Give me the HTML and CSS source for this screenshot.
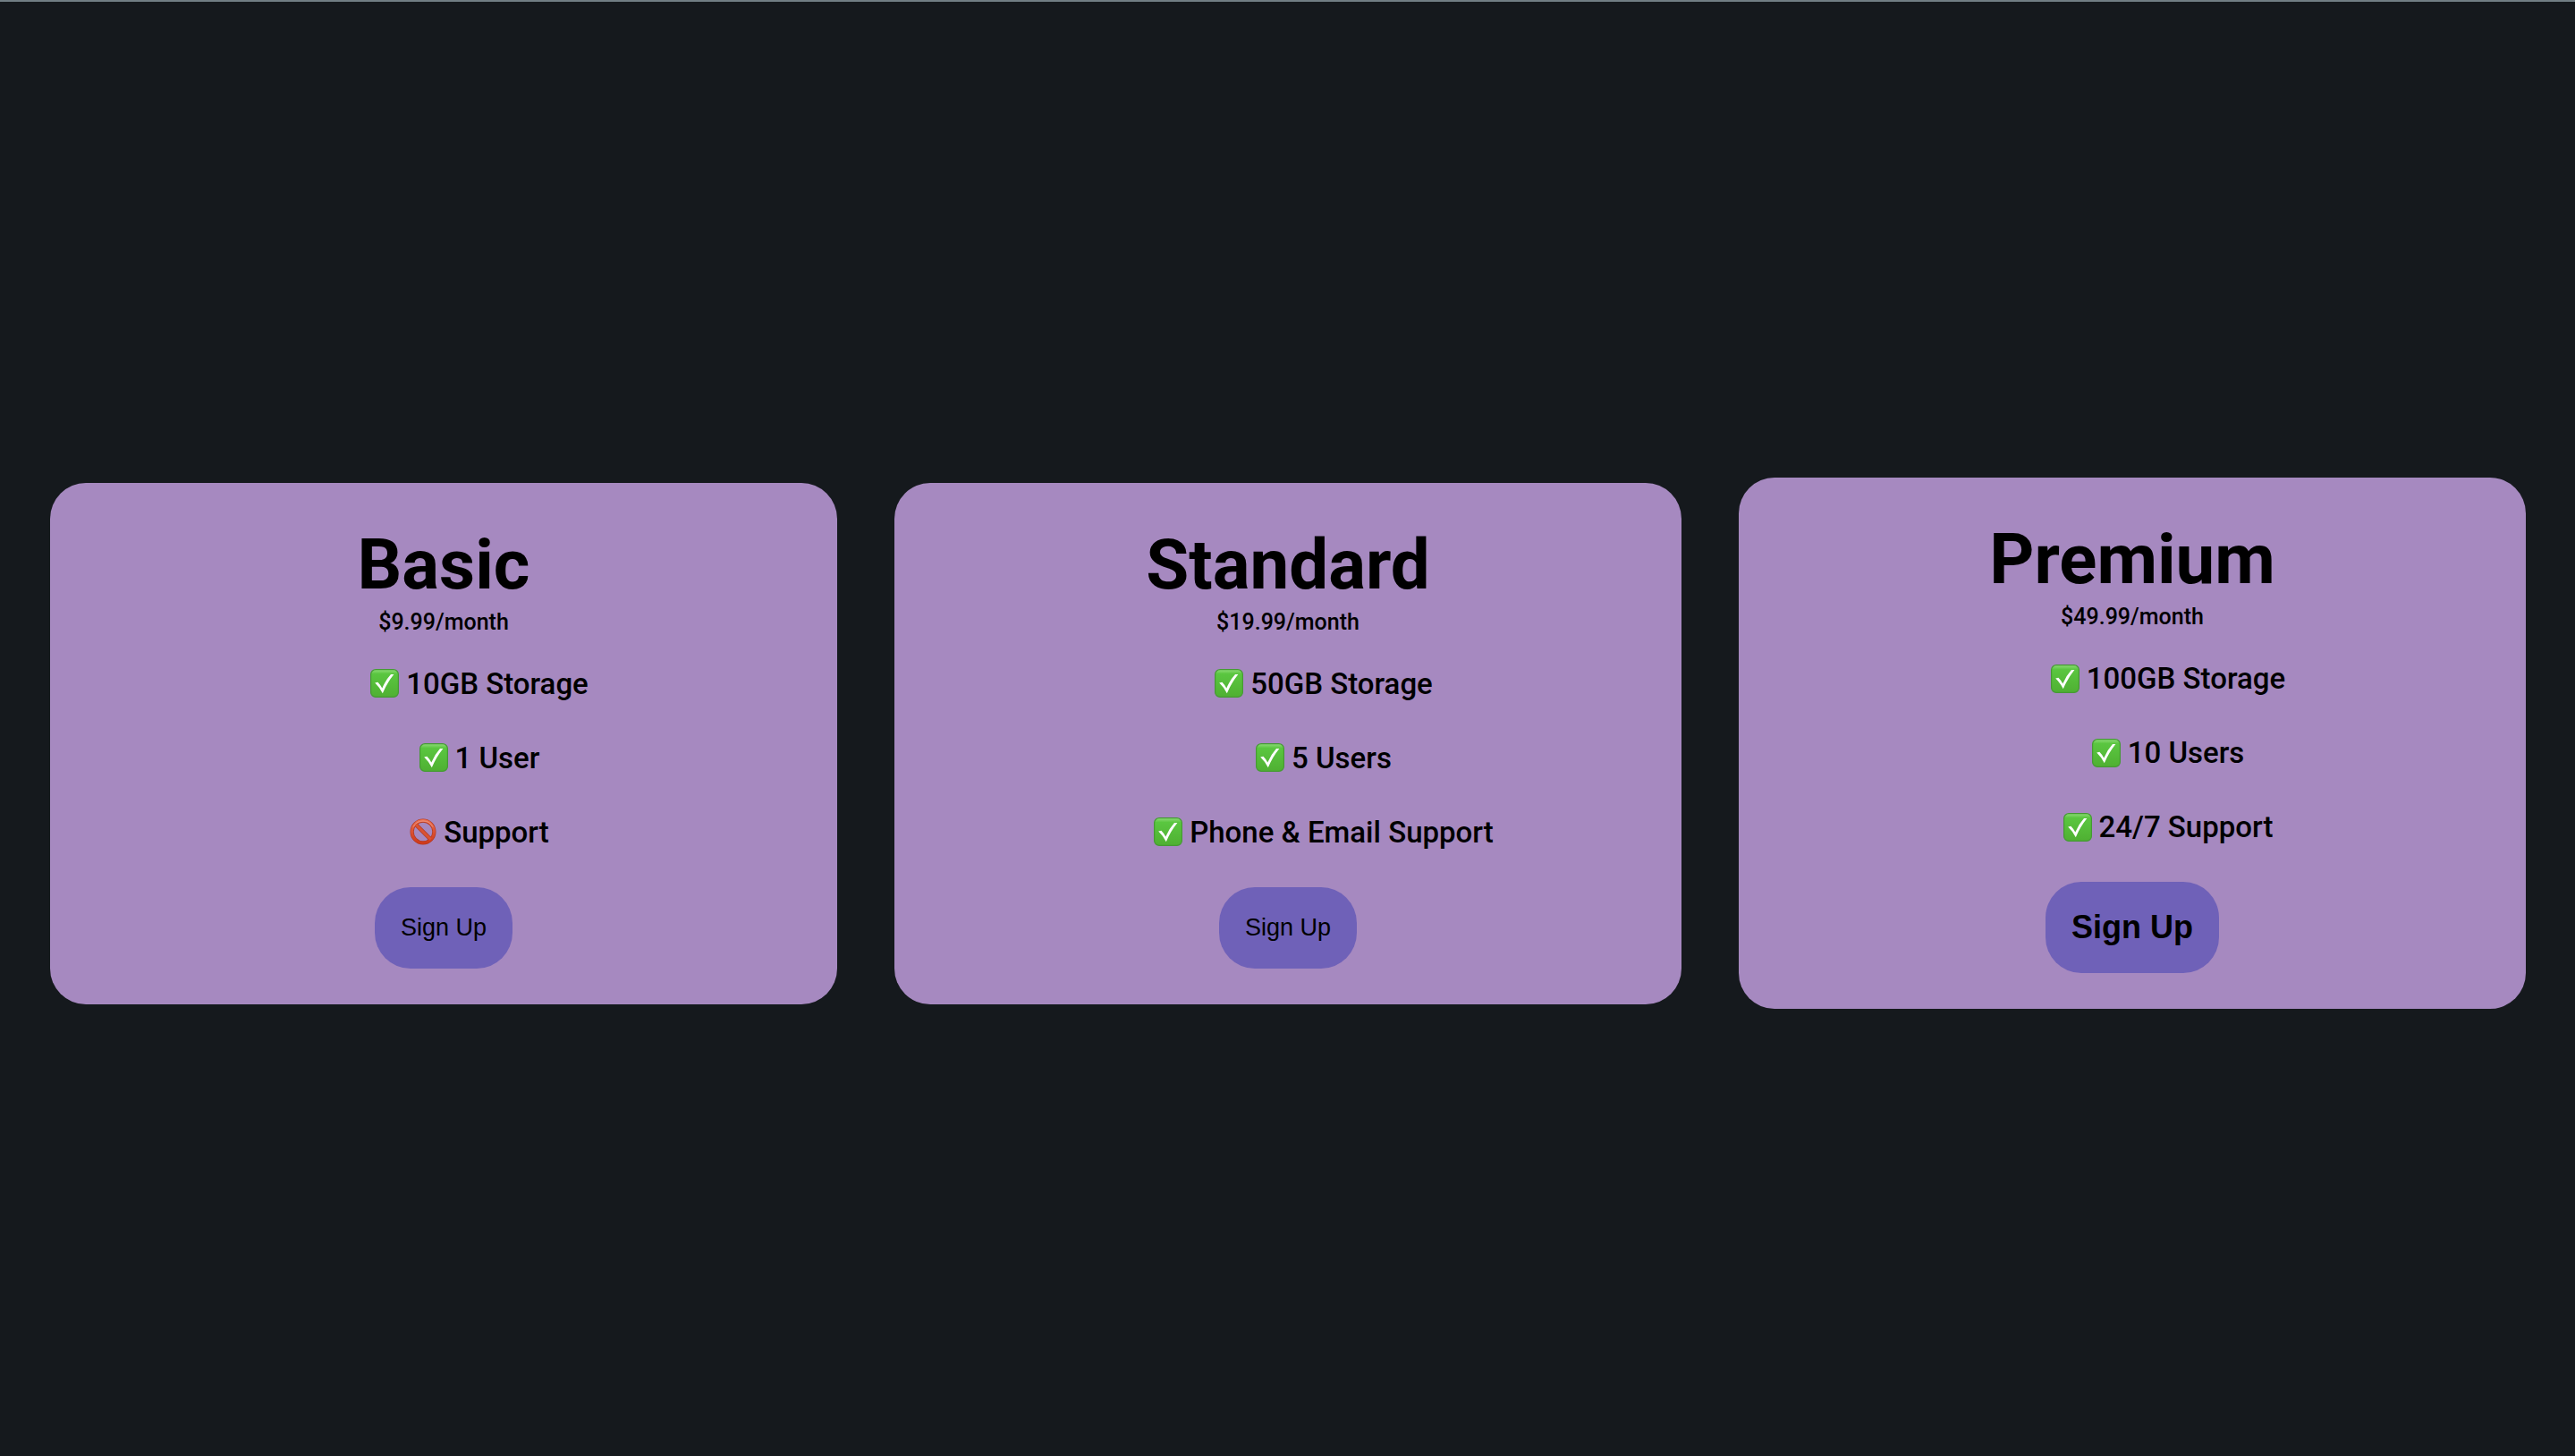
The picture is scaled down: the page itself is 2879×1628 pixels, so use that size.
FILE: index.html
```html
<!DOCTYPE html>
<html lang="en">
<head>
<meta charset="utf-8">
<title>Pricing</title>
<link rel="stylesheet" href="styles.css">
</head>
<body>
<svg class="sprite" aria-hidden="true">
  <defs>
    <linearGradient id="green" x1="0" y1="0" x2="0" y2="1">
      <stop offset="0" stop-color="#8fdc78"/>
      <stop offset="0.16" stop-color="#5ac640"/>
      <stop offset="1" stop-color="#4fb032"/>
    </linearGradient>
    <linearGradient id="red" x1="0" y1="0" x2="0" y2="1">
      <stop offset="0" stop-color="#e8694c"/>
      <stop offset="1" stop-color="#cf3a1c"/>
    </linearGradient>
    <symbol id="yes" viewBox="0 0 32 32">
      <rect x="0.6" y="0.6" width="30.8" height="30.8" rx="5.5" fill="url(#green)" stroke="#459a34" stroke-width="1.2"/>
      <path d="M5.2 15.6 L8.4 14.8 Q11.6 18 13.3 21.6 Q17 12.6 23 6 L26.4 6 Q18.8 15.4 13.8 27.2 Q10.4 20.6 5.2 15.6 Z" fill="#fff"/>
    </symbol>
    <symbol id="no" viewBox="0 0 30 30">
      <g fill="none">
        <circle cx="15" cy="15" r="12.4" stroke="#b03a20" stroke-width="4.2"/>
        <path d="M6.4 6.4 L23.6 23.6" stroke="#b03a20" stroke-width="4.4"/>
        <circle cx="15" cy="15" r="12.4" stroke="url(#red)" stroke-width="3"/>
        <path d="M6.4 6.4 L23.6 23.6" stroke="#da5233" stroke-width="3"/>
        <path d="M4 9.6 A12.4 12.4 0 0 1 26 9.6" stroke="#f0a28c" stroke-width="0.8"/>
      </g>
    </symbol>
  </defs>
</svg>
<main class="plans">
  <section class="plan">
    <h1 class="plan-name">Basic</h1>
    <p class="price">$9.99/month</p>
    <ul class="features">
      <li><svg class="mark" role="img" aria-label="Included"><use href="#yes"/></svg>10GB Storage</li>
      <li><svg class="mark" role="img" aria-label="Included"><use href="#yes"/></svg>1 User</li>
      <li><svg class="mark mark-no" role="img" aria-label="Not included"><use href="#no"/></svg>Support</li>
    </ul>
    <button class="sign-up" type="button">Sign Up</button>
  </section>
  <section class="plan">
    <h1 class="plan-name">Standard</h1>
    <p class="price">$19.99/month</p>
    <ul class="features">
      <li><svg class="mark" role="img" aria-label="Included"><use href="#yes"/></svg>50GB Storage</li>
      <li><svg class="mark" role="img" aria-label="Included"><use href="#yes"/></svg>5 Users</li>
      <li><svg class="mark" role="img" aria-label="Included"><use href="#yes"/></svg>Phone &amp; Email Support</li>
    </ul>
    <button class="sign-up" type="button">Sign Up</button>
  </section>
  <section class="plan">
    <h1 class="plan-name">Premium</h1>
    <p class="price">$49.99/month</p>
    <ul class="features">
      <li><svg class="mark" role="img" aria-label="Included"><use href="#yes"/></svg>100GB Storage</li>
      <li><svg class="mark" role="img" aria-label="Included"><use href="#yes"/></svg>10 Users</li>
      <li><svg class="mark" role="img" aria-label="Included"><use href="#yes"/></svg>24/7 Support</li>
    </ul>
    <button class="sign-up sign-up-large" type="button">Sign Up</button>
  </section>
</main>
</body>
</html>
```
FILE: styles.css
```css
* {
  box-sizing: border-box;
}

body {
  margin: 0;
  min-height: 100vh;
  display: flex;
  align-items: center;
  padding: 32px 55px 0 56px;
  border-top: 2px solid #717e84;
  background: #15191d;
  color: #000;
  font-family: Roboto, sans-serif;
  font-weight: 500;
}

.sprite {
  position: absolute;
  width: 0;
  height: 0;
}

.plans {
  flex: 1;
  display: grid;
  grid-template-columns: repeat(3, 1fr);
  gap: 64px;
  align-items: center;
}

.plan {
  display: flex;
  flex-direction: column;
  align-items: center;
  padding: 40px;
  border-radius: 40px;
  background: #a689c0;
}

.plan-name {
  margin: 0;
  font-size: 78px;
  font-weight: 700;
  line-height: 104px;
}

.price {
  margin: 0 0 35px;
  font-size: 25px;
  line-height: 24px;
}

.features {
  margin: 0;
  padding: 0 0 0 80px;
  list-style: none;
  font-size: 33px;
  line-height: 43px;
}

.features li {
  display: flex;
  align-items: center;
  justify-content: center;
  gap: 8px;
  margin-bottom: 40px;
}

.mark {
  width: 32px;
  height: 32px;
}

.mark-no {
  width: 30px;
  height: 30px;
}

.sign-up {
  padding: 30px 29px;
  border: 0;
  border-radius: 40px;
  background: #6f61b8;
  color: #000;
  font-family: "Liberation Sans", Arial, sans-serif;
  font-size: 27px;
  line-height: 31px;
  cursor: pointer;
}

.sign-up-large {
  font-size: 36px;
  font-weight: 700;
  line-height: 42px;
}
```
